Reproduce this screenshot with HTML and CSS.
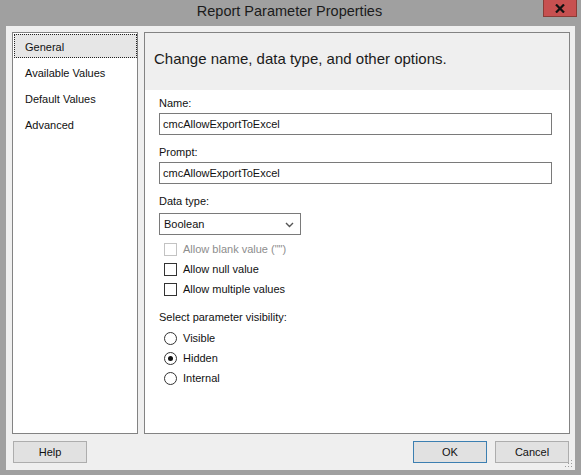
FILE: index.html
```html
<!DOCTYPE html>
<html>
<head>
<meta charset="utf-8">
<title>Report Parameter Properties</title>
<link rel="stylesheet" href="styles.css">
</head>
<body>
<div class="window">
  <div class="titlebar">
    <span class="title">Report Parameter Properties</span>
    <button class="close" aria-label="Close">
      <svg width="10" height="9" viewBox="0 0 10 9"><path d="M1 0.5 L9 8.5 M9 0.5 L1 8.5" stroke="#111" stroke-width="2.2" fill="none"/></svg>
    </button>
  </div>
  <div class="client">
    <div class="main">
      <nav class="nav">
        <div class="nav-item selected">General</div>
        <div class="nav-item">Available Values</div>
        <div class="nav-item">Default Values</div>
        <div class="nav-item">Advanced</div>
      </nav>
      <section class="panel">
        <div class="panel-header">Change name, data type, and other options.</div>
        <div class="panel-body">
          <div class="field">
            <div class="label">Name:</div>
            <div class="textbox">cmcAllowExportToExcel</div>
          </div>
          <div class="field">
            <div class="label">Prompt:</div>
            <div class="textbox">cmcAllowExportToExcel</div>
          </div>
          <div class="field">
            <div class="label select-label">Data type:</div>
            <div class="select">
              <span>Boolean</span>
              <svg class="chev" width="9" height="6" viewBox="0 0 9 6"><path d="M1 1 L4.5 4.5 L8 1" stroke="#555" stroke-width="1.4" fill="none"/></svg>
            </div>
          </div>
          <div class="options checks">
            <div class="option disabled"><span class="check"></span>Allow blank value ("")</div>
            <div class="option"><span class="check"></span>Allow null value</div>
            <div class="option"><span class="check"></span>Allow multiple values</div>
          </div>
          <div class="label vis-label">Select parameter visibility:</div>
          <div class="options radios">
            <div class="option"><span class="radio"></span>Visible</div>
            <div class="option"><span class="radio on"></span>Hidden</div>
            <div class="option"><span class="radio"></span>Internal</div>
          </div>
        </div>
      </section>
    </div>
    <div class="footer">
      <button class="btn">Help</button>
      <div class="footer-right">
        <button class="btn default">OK</button>
        <button class="btn">Cancel</button>
      </div>
    </div>
    <svg class="grip" width="8" height="8" viewBox="0 0 8 8">
      <rect x="6" y="0" width="1" height="1" fill="#9a9a9a"/>
      <rect x="3" y="3" width="1" height="1" fill="#9a9a9a"/>
      <rect x="6" y="3" width="1" height="1" fill="#9a9a9a"/>
      <rect x="0" y="6" width="1" height="1" fill="#9a9a9a"/>
      <rect x="3" y="6" width="1" height="1" fill="#9a9a9a"/>
      <rect x="6" y="6" width="1" height="1" fill="#9a9a9a"/>
    </svg>
  </div>
</div>
</body>
</html>
```
FILE: styles.css
```css
* { box-sizing: border-box; }
html, body { margin: 0; padding: 0; }
body {
  width: 581px;
  height: 475px;
  background: #a0a0a0;
  font-family: "Liberation Sans", Arial, sans-serif;
  font-size: 11px;
  color: #111;
  overflow: hidden;
}
.window {
  width: 581px;
  height: 475px;
  display: flex;
  flex-direction: column;
  background: #a0a0a0;
  position: relative;
}
.titlebar {
  height: 26px;
  display: flex;
  justify-content: center;
  align-items: flex-start;
  padding-top: 2px;
}
.title {
  font-size: 14.5px;
  line-height: 18px;
  color: #1b1b1b;
  padding-right: 2px;
}
.close {
  position: absolute;
  top: 0;
  left: 543px;
  width: 34px;
  height: 17px;
  margin: 0;
  padding: 0;
  border: 1px solid #8a3c36;
  border-top: none;
  background: #c75050;
  display: flex;
  align-items: center;
  justify-content: center;
}
.client {
  position: relative;
  margin: 0 6px;
  height: 444px;
  background: #efefef;
  padding: 6px 5px 0 6px;
  display: flex;
  flex-direction: column;
}
.main {
  height: 402px;
  display: flex;
  gap: 6px;
}
.nav {
  width: 126px;
  border: 1px solid #838383;
  background: #fff;
  padding: 1px 0 0 1px;
}
.nav-item {
  height: 26px;
  line-height: 26px;
  padding-left: 11px;
  color: #111;
}
.nav-item.selected {
  height: 24px;
  margin-bottom: 2px;
  background: #e6e6e6;
  outline: 1px dotted #222;
  outline-offset: -1px;
  line-height: 26px;
}
.panel {
  flex: 1;
  border: 1px solid #838383;
  background: #fff;
  display: flex;
  flex-direction: column;
}
.panel-header {
  height: 57px;
  background: #efefef;
  font-size: 15px;
  line-height: 18px;
  padding: 17px 0 0 9px;
  color: #1b1b1b;
}
.panel-body {
  padding: 6px 17px 0 14px;
}
.field {
  margin-bottom: 10px;
}
.label {
  height: 14px;
  line-height: 14px;
  margin-bottom: 3px;
  color: #111;
}
.select-label { margin-bottom: 5px; }
.textbox {
  height: 22px;
  border: 1px solid #7a7a7a;
  line-height: 20px;
  padding-left: 3px;
  background: #fff;
}
.select {
  width: 142px;
  height: 22px;
  border: 1px solid #7a7a7a;
  line-height: 20px;
  padding: 0 6px 0 4px;
  display: flex;
  justify-content: space-between;
  align-items: center;
  background: #fff;
}
.select .chev { margin-top: 1px; }
.options {
  padding-left: 5px;
}
.checks { margin-top: -6px; }
.radios { margin-top: 0; }
.option {
  height: 20px;
  display: flex;
  align-items: center;
  gap: 6px;
  color: #111;
}
.option.disabled { color: #8d8d8d; }
.check {
  width: 13px;
  height: 13px;
  border: 1px solid #333;
  background: #fff;
}
.option.disabled .check { border-color: #c3c3c3; }
.radio {
  width: 13px;
  height: 13px;
  border: 1px solid #333;
  border-radius: 50%;
  background: #fff;
  display: flex;
  align-items: center;
  justify-content: center;
}
.radio.on::after {
  content: "";
  width: 5px;
  height: 5px;
  border-radius: 50%;
  background: #111;
}
.vis-label {
  margin-top: 11px;
  margin-bottom: 4px;
}
.footer {
  margin-top: 7px;
  height: 22px;
  display: flex;
  justify-content: space-between;
  padding-left: 1px;
  padding-right: 1px;
}
.footer-right {
  display: flex;
  gap: 8px;
}
.btn {
  width: 74px;
  height: 22px;
  margin: 0;
  padding: 0;
  border: 1px solid #adadad;
  background: #e1e1e1;
  font-family: "Liberation Sans", Arial, sans-serif;
  font-size: 11px;
  color: #111;
}
.btn.default { border-color: #3c7fb1; }
.grip {
  position: absolute;
  right: 2px;
  bottom: 2px;
}
```
